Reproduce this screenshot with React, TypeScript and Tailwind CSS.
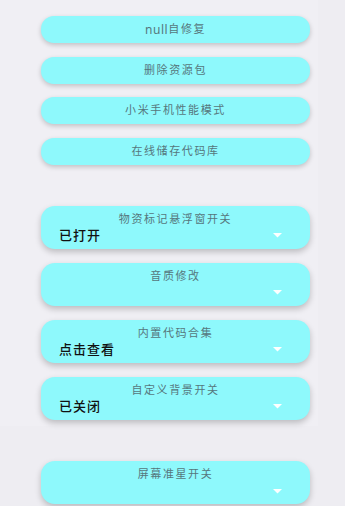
import React from "react";

const buttons = ["null自修复", "删除资源包", "小米手机性能模式", "在线储存代码库"];

const cards: { title: string; value: string }[] = [
  { title: "物资标记悬浮窗开关", value: "已打开" },
  { title: "音质修改", value: "" },
  { title: "内置代码合集", value: "点击查看" },
  { title: "自定义背景开关", value: "已关闭" },
];

const Caret = () => (
  <svg width="9" height="5" viewBox="0 0 9 5" className="shrink-0">
    <path d="M0 0 H9 L4.5 4.5 Z" fill="#ffffff" />
  </svg>
);

const SelectCard = ({ title, value }: { title: string; value: string }) => (
  <div className="w-[269px] h-[43px] rounded-[14px] bg-[#8ef9fc] shadow-[0_3px_6px_rgba(0,0,0,0.22)] flex flex-col px-[18px] pt-[6px]">
    <div className="text-center text-[11px] leading-[14px] tracking-[1.6px] text-[#56777c]">{title}</div>
    <div className="flex items-center justify-between h-[18px]">
      <span className="text-[13px] leading-[18px] tracking-[1px] text-[#111] font-medium">{value}</span>
      <span className="mr-[10px] mt-[2px]">
        <Caret />
      </span>
    </div>
  </div>
);

// latin part of a label keeps normal spacing
const Label = ({ text }: { text: string }) => {
  const m = text.match(/^([A-Za-z]+)(.*)$/);
  if (!m) return <>{text}</>;
  return (
    <>
      <span className="tracking-[0.6px] text-[12px]">{m[1]}</span>
      {m[2]}
    </>
  );
};

export default function App() {
  return (
    <div
      className="w-[345px] h-[506px] overflow-hidden bg-[#eeedf2]"
      style={{ fontFamily: '"Noto Sans", "Noto Sans CJK SC", sans-serif' }}
    >
      <div className="w-[318px] h-[426px] bg-[#f0eff4] flex flex-col pt-[16px]">
        <div className="flex flex-col gap-[13.5px] ml-[41px]">
          {buttons.map((b) => (
            <div
              key={b}
              className="w-[269px] h-[27px] rounded-[13px] bg-[#8ef9fc] shadow-[0_2px_5px_rgba(0,0,0,0.2)] flex items-center justify-center text-[11px] tracking-[1.6px] text-[#56777c]"
            >
              <Label text={b} />
            </div>
          ))}
        </div>
        <div className="flex flex-col gap-[14px] ml-[41px] mt-[41px]">
          {cards.map((c) => (
            <SelectCard key={c.title} title={c.title} value={c.value} />
          ))}
        </div>
      </div>
      <div className="ml-[41px] mt-[35px]">
        <SelectCard title="屏幕准星开关" value="" />
      </div>
    </div>
  );
}
